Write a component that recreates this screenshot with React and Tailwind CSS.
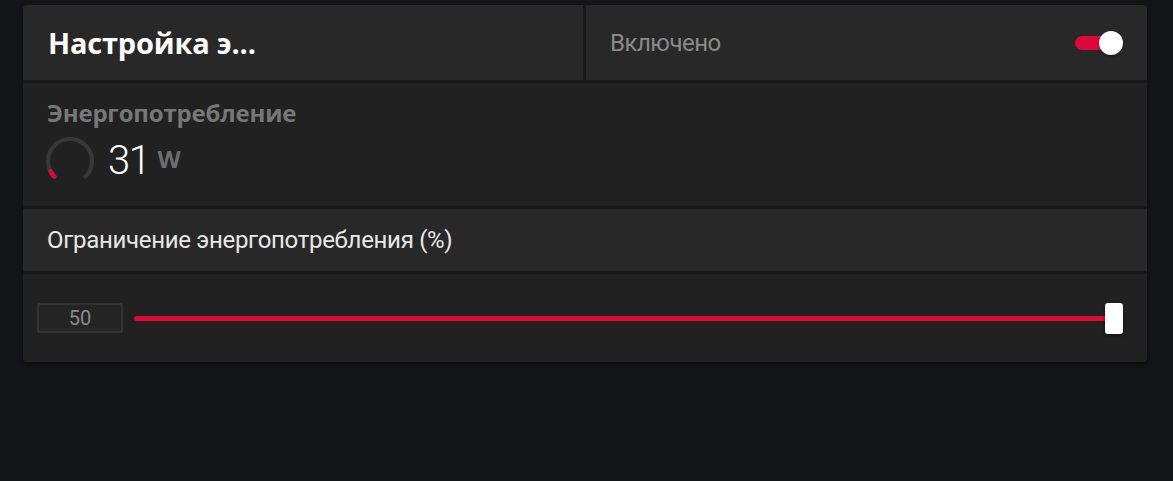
import React from "react";

function Gauge() {
  const r = 22;
  const cx = 25, cy = 25;
  const pt = (deg) => {
    const a = (deg * Math.PI) / 180;
    return [cx + r * Math.sin(a), cy - r * Math.cos(a)];
  };
  const [sx, sy] = pt(-135);
  const [ex, ey] = pt(140);
  const [rx, ry] = pt(-118);
  return (
    <svg width="50" height="50" viewBox="0 0 50 50" className="shrink-0">
      <path d={`M ${sx} ${sy} A ${r} ${r} 0 1 1 ${ex} ${ey}`} fill="none" stroke="#383838" strokeWidth="4" />
      <path d={`M ${sx} ${sy} A ${r} ${r} 0 0 1 ${rx} ${ry}`} fill="none" stroke="#e0083a" strokeWidth="4.5" strokeLinecap="round" />
    </svg>
  );
}

export default function App() {
  return (
    <div className="w-[1173px] h-[481px] bg-[#141518] pt-[5px] pl-[23px]" style={{ fontFamily: '"Open Sans", "Noto Sans", sans-serif' }}>
      <div className="w-[1124px] rounded-[4px] overflow-hidden bg-[#191919] flex flex-col gap-[3px] shadow-[0_2px_4px_rgba(0,0,0,0.5)]">
        <div className="flex h-[75px] gap-[3px]">
          <div className="w-[560px] bg-[#282828] flex items-center pl-[25px]">
            <span className="text-white text-[29px] font-bold tracking-[-0.2px] leading-[36px]">Настройка э...</span>
          </div>
          <div className="flex-1 bg-[#282828] flex items-center justify-between pl-[24px] pr-[24px]">
            <span className="text-[#8a8a8a] text-[24px] tracking-[-0.5px] leading-[32px]" style={{ fontFamily: 'Roboto, sans-serif' }}>Включено</span>
            <div className="relative w-[48px] h-[24px] flex items-center">
              <div className="w-[42px] h-[14px] rounded-full bg-[#e0083a]" />
              <div className="absolute right-0 top-0 w-[24px] h-[24px] rounded-full bg-white shadow-[0_1px_2px_rgba(0,0,0,0.5)]" />
            </div>
          </div>
        </div>
        <div className="h-[123px] bg-[#212121] pl-[24px] pt-[14px]">
          <div className="text-[#777777] text-[24px] font-bold leading-[32px] tracking-[-0.2px]">Энергопотребление</div>
          <div className="flex items-center mt-[7px] -ml-[2px]">
            <Gauge />
            <span className="text-white text-[40px] leading-[46px] ml-[13px] tracking-[-1.5px]" style={{ fontFamily: 'Roboto, sans-serif', fontWeight: 300 }}>31</span>
            <span className="text-[#6e6e6e] text-[24px] font-bold ml-[8px] -mt-[4px]">W</span>
          </div>
        </div>
        <div className="h-[62px] bg-[#282828] flex items-center pl-[24px]">
          <span className="text-[#e8e8e8] text-[24px] tracking-[-0.3px] leading-[32px]" style={{ fontFamily: 'Roboto, sans-serif' }}>Ограничение энергопотребления (%)</span>
        </div>
        <div className="h-[88px] bg-[#212121] flex items-center pl-[14px] pr-[24px]">
          <div className="w-[86px] h-[30px] border-2 border-[#333333] rounded-[2px] bg-[#242424] flex items-center justify-center text-[#8a8a8a] text-[20px]" style={{ fontFamily: 'Roboto, sans-serif' }}>50</div>
          <div className="flex-1 flex items-center ml-[11px]">
            <div className="flex-1 h-[5px] rounded-full bg-[#e0083a]" />
            <div className="w-[18px] h-[31px] rounded-[3px] bg-white -ml-[4px] shadow-[0_1px_3px_rgba(0,0,0,0.6)]" />
          </div>
        </div>
      </div>
    </div>
  );
}
